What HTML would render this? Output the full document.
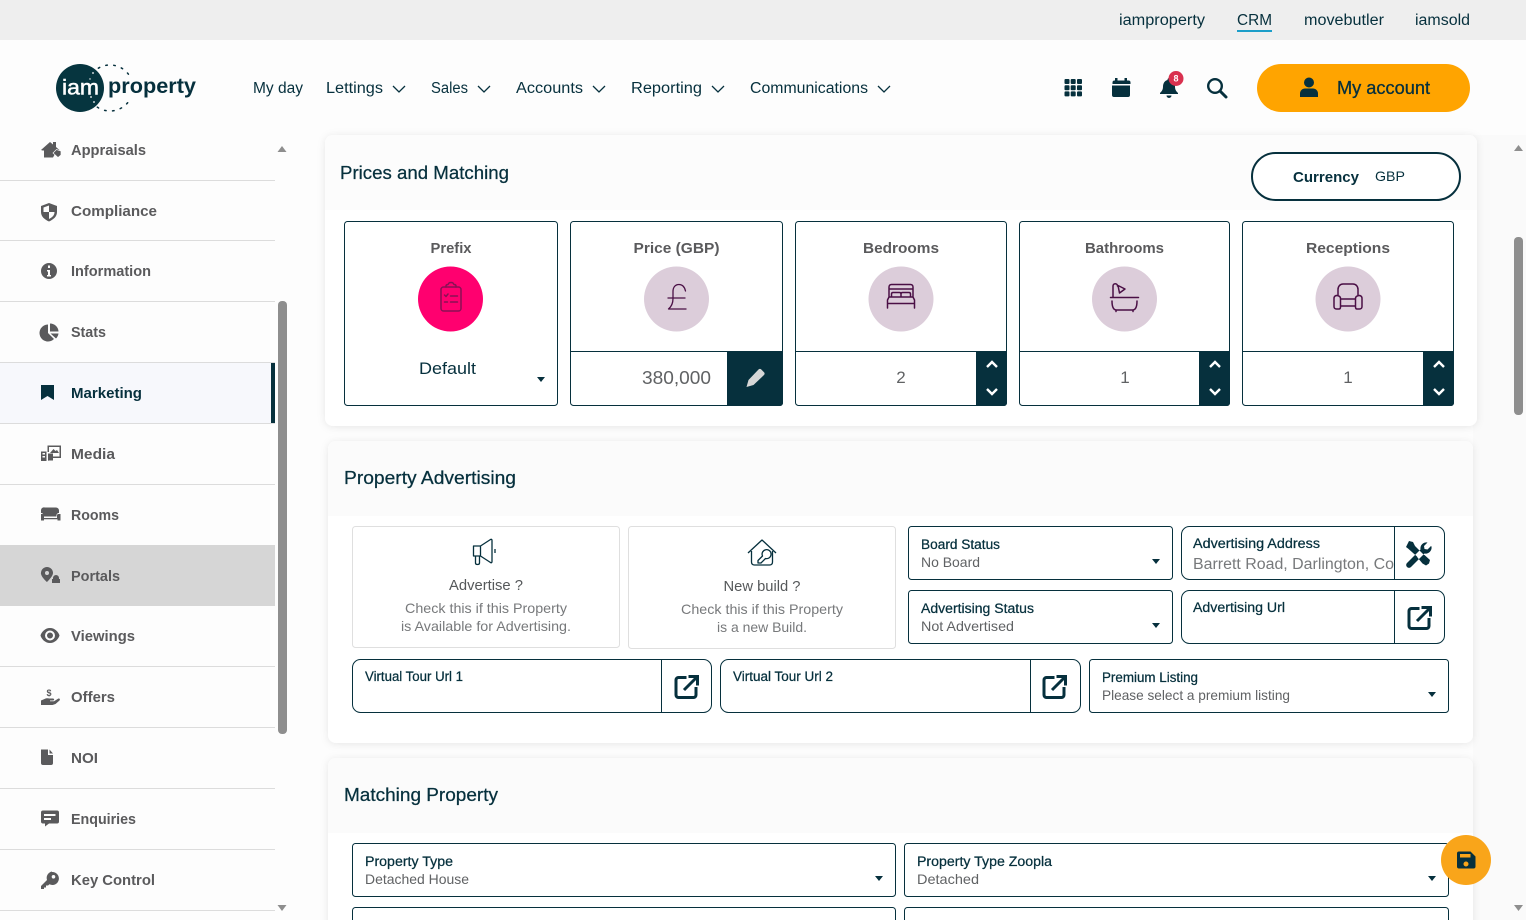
<!DOCTYPE html>
<html lang="en"><head><meta charset="utf-8"><title>iamproperty CRM</title>
<style>
html,body{margin:0;padding:0;width:1526px;height:920px;overflow:hidden;background:#fdfdfd}
svg{display:block;position:absolute;left:0;top:0}
text{font-family:"Liberation Sans",sans-serif;fill:#06303d}
.nav{font-size:15.5px}
.side{font-size:15px;font-weight:700;fill:#5a5a5c}
.title{font-size:18px;stroke:#06303d;stroke-width:.25}
.tile{font-size:15px;font-weight:700;fill:#5a5a5c;text-anchor:middle}
.lab{font-size:13.5px;stroke:#06303d;stroke-width:.25}
.val{font-size:14px;fill:#606264}
.big{font-size:15px;fill:#55585a;text-anchor:middle}
.sm{font-size:14px;fill:#77797b;text-anchor:middle}
.num{font-size:17px;fill:#606264;text-anchor:middle}
.box{fill:#fff;stroke:#06303d;stroke-width:1}
.ln{stroke:#06303d;stroke-width:1}
.sep{stroke:#dcdcdc;stroke-width:1}
.chev{fill:none;stroke:#06303d;stroke-width:1.3}
.wchev{fill:none;stroke:#fff;stroke-width:2.4}
.plum{fill:none;stroke:#4a0f45;stroke-width:1.5;stroke-linecap:round;stroke-linejoin:round}
.ico{fill:#5a5a5c}
</style></head><body>
<svg width="1526" height="920" viewBox="0 0 1526 920" xmlns="http://www.w3.org/2000/svg">
<defs>
<filter id="sh" x="-3%" y="-8%" width="106%" height="116%"><feDropShadow dx="0" dy="1" stdDeviation="4" flood-color="#000" flood-opacity=".09"/></filter>
<symbol id="ext" viewBox="0 0 26 26" width="26" height="26" overflow="visible"><path d="M12.500 3.500H4.500a2.500 2.500 0 0 0-2.500 2.500v15a2.500 2.500 0 0 0 2.500 2.500h15a2.500 2.500 0 0 0 2.500-2.500v-8" fill="none" stroke="#06303d" stroke-width="3"/><path d="M10 16L23 3M14.500 2.500h9v9" fill="none" stroke="#06303d" stroke-width="3"/></symbol>
<symbol id="caret" viewBox="0 0 8 5" width="8" height="5"><path d="M0 0h8L4 5z" fill="#06303d"/></symbol>
<symbol id="dn" viewBox="0 0 14 8" width="14" height="8" overflow="visible"><path d="M1 1l6 6 6-6" class="chev"/></symbol>
<symbol id="st" viewBox="0 0 14 9" width="14" height="9" overflow="visible"><path d="M2 7l5-5 5 5" class="wchev"/></symbol>
<symbol id="sd" viewBox="0 0 14 9" width="14" height="9" overflow="visible"><path d="M2 2l5 5 5-5" class="wchev"/></symbol>
</defs>

<!-- top bar -->
<rect width="1526" height="40" fill="#eeeeee"/>
<text x="1119" y="25" class="nav" textLength="86" lengthAdjust="spacingAndGlyphs">iamproperty</text>
<text x="1237" y="25" class="nav" textLength="35" lengthAdjust="spacingAndGlyphs">CRM</text>
<rect x="1237" y="30" width="35" height="2" fill="#1c9ec9"/>
<text x="1304" y="25" class="nav" textLength="80" lengthAdjust="spacingAndGlyphs">movebutler</text>
<text x="1415" y="25" class="nav" textLength="55" lengthAdjust="spacingAndGlyphs">iamsold</text>

<!-- logo -->
<circle cx="110" cy="88" r="23" fill="none" stroke="#06303d" stroke-width="1.500" stroke-dasharray="1.500 6.500" stroke-linecap="round"/>
<rect x="104" y="79" width="36" height="20" fill="#fdfdfd"/>
<circle cx="80" cy="88" r="24" fill="#06353f"/>
<circle cx="93" cy="73" r=".9" fill="#fff"/><circle cx="91" cy="97" r=".9" fill="#fff"/><circle cx="94" cy="102" r=".9" fill="#fff"/><circle cx="90" cy="79" r=".7" fill="#fff"/>
<text x="62" y="94.500" style="font-size:21px;fill:#fff;stroke:#fff;stroke-width:.5" textLength="37" lengthAdjust="spacingAndGlyphs">iam</text>
<text x="108" y="93" style="font-size:21px;font-weight:700" textLength="88" lengthAdjust="spacingAndGlyphs">property</text>

<!-- nav -->
<text x="253" y="93" class="nav" textLength="50" lengthAdjust="spacingAndGlyphs">My day</text>
<text x="326" y="93" class="nav" textLength="57" lengthAdjust="spacingAndGlyphs">Lettings</text><use href="#dn" x="392" y="85"/>
<text x="431" y="93" class="nav" textLength="37" lengthAdjust="spacingAndGlyphs">Sales</text><use href="#dn" x="477" y="85"/>
<text x="516" y="93" class="nav" textLength="67" lengthAdjust="spacingAndGlyphs">Accounts</text><use href="#dn" x="592" y="85"/>
<text x="631" y="93" class="nav" textLength="71" lengthAdjust="spacingAndGlyphs">Reporting</text><use href="#dn" x="711" y="85"/>
<text x="750" y="93" class="nav" textLength="118" lengthAdjust="spacingAndGlyphs">Communications</text><use href="#dn" x="877" y="85"/>

<!-- header icons -->
<g fill="#06303d">
<rect x="1064.500" y="79" width="5" height="5" rx="1"/><rect x="1070.700" y="79" width="5" height="5" rx="1"/><rect x="1077" y="79" width="5" height="5" rx="1"/><rect x="1064.500" y="85.200" width="5" height="5" rx="1"/><rect x="1070.700" y="85.200" width="5" height="5" rx="1"/><rect x="1077" y="85.200" width="5" height="5" rx="1"/><rect x="1064.500" y="91.400" width="5" height="5" rx="1"/><rect x="1070.700" y="91.400" width="5" height="5" rx="1"/><rect x="1077" y="91.400" width="5" height="5" rx="1"/>
<path d="M1115 78h2.500v2.500h7V78h2.500v2.500h1.500a2 2 0 0 1 2 2V84h-18v-1.500a2 2 0 0 1 2-2h.500zM1112 85.500h18V95a2 2 0 0 1-2 2h-14a2 2 0 0 1-2-2z"/>
<path d="M1169 78a2 2 0 0 1 1.500 2c3 .8 4.500 3.500 4.500 6.500 0 3.500 1.300 4.800 3 6.500v1h-18v-1c1.700-1.700 3-3 3-6.500 0-3 1.500-5.700 4.500-6.500a2 2 0 0 1 1.500-2zM1166.500 95.500h5a2.500 2.500 0 0 1-5 0z"/>
</g>
<circle cx="1176" cy="78.500" r="7.500" fill="#d9314f"/>
<text x="1176" y="81.500" text-anchor="middle" style="font-size:9px;font-weight:700;fill:#fff">8</text>
<circle cx="1215" cy="86" r="6.800" fill="none" stroke="#06303d" stroke-width="2.400"/><path d="M1220 91l6 6" stroke="#06303d" stroke-width="3" stroke-linecap="round"/>
<rect x="1257" y="64" width="213" height="48" rx="24" fill="#ffa400"/>
<path d="M1300 97v-3.500c0-3 2.500-5 5-5h8c2.500 0 5 2 5 5V97z" fill="#06303d"/><circle cx="1309" cy="82.500" r="5" fill="#06303d"/>
<text x="1337" y="94" style="font-size:18px;stroke:#06303d;stroke-width:.3" textLength="93" lengthAdjust="spacingAndGlyphs">My account</text>

<!-- sidebar -->
<g>
<rect x="0" y="363" width="275" height="60" fill="#f7f8fc"/>
<rect x="271" y="363" width="4" height="61" fill="#06303d"/>
<rect x="0" y="545" width="275" height="61" fill="#d6d6d6"/>
<path class="sep" d="M0 180.500h275M0 240.500h275M0 301.500h275M0 362.500h275M0 423.500h275M0 484.500h275M0 666.500h275M0 727.500h275M0 788.500h275M0 849.500h275M0 910.500h275"/>
<text x="71" y="155" class="side" textLength="75" lengthAdjust="spacingAndGlyphs">Appraisals</text>
<text x="71" y="216" class="side" textLength="86" lengthAdjust="spacingAndGlyphs">Compliance</text>
<text x="71" y="276" class="side" textLength="80" lengthAdjust="spacingAndGlyphs">Information</text>
<text x="71" y="337" class="side" textLength="35" lengthAdjust="spacingAndGlyphs">Stats</text>
<text x="71" y="398" class="side" style="fill:#06303d" textLength="71" lengthAdjust="spacingAndGlyphs">Marketing</text>
<text x="71" y="459" class="side" textLength="44" lengthAdjust="spacingAndGlyphs">Media</text>
<text x="71" y="520" class="side" textLength="48" lengthAdjust="spacingAndGlyphs">Rooms</text>
<text x="71" y="581" class="side" textLength="49" lengthAdjust="spacingAndGlyphs">Portals</text>
<text x="71" y="641" class="side" textLength="64" lengthAdjust="spacingAndGlyphs">Viewings</text>
<text x="71" y="702" class="side" textLength="44" lengthAdjust="spacingAndGlyphs">Offers</text>
<text x="71" y="763" class="side" textLength="27" lengthAdjust="spacingAndGlyphs">NOI</text>
<text x="71" y="824" class="side" textLength="65" lengthAdjust="spacingAndGlyphs">Enquiries</text>
<text x="71" y="885" class="side" textLength="84" lengthAdjust="spacingAndGlyphs">Key Control</text>

<!-- sidebar icons -->
<g class="ico">
<path d="M41 150l9-8 3 2.500V142h3v5l4 3.500-2 .5-2.500 2-2.500 4.500H44v-7h-1.500z"/><path d="M53 153l3.500-3.500 4.500 1.500v4l-3 2.500z" stroke="#fdfdfd" stroke-width=".7"/>
<path fill-rule="evenodd" d="M49 203l8 3v6c0 4.500-3.500 7.500-8 9.500-4.500-2-8-5-8-9.500v-6zM49 205.500l-5.500 2v4.500H49zM49 212v7c3-1.500 5.500-3.500 5.500-7z"/>
<path fill-rule="evenodd" d="M49 263a8 8 0 1 1 0 16 8 8 0 0 1 0-16zM48 265.500v2.500h2v-2.500zM47 270v1.500h1V275h-1v1.500h4V275h-1v-5z"/>
<path d="M48 324.500v8.500l6 6a8.500 8.500 0 1 1-6-14.500zM50 323.500a8.500 8.500 0 0 1 8.500 8H50zM50.500 333.500h8a8.500 8.500 0 0 1-2.500 5z"/>
<path d="M41 385h13v15l-6.500-4-6.500 4z" fill="#06303d"/>
<path fill-rule="evenodd" d="M47.500 445.500h13.500v12.500h-8v-1.500h6.500V447h-10.500v5h-1.500zM50 453l3.500-4 2 2 1.500-1 2 3zM41 451.500h5.500V461H41zM42.500 453v1.500h2.500V453zM42.500 456v1.500h2.500V456zM48 453.500h5v7h-4v.1h-1z"/>
<path d="M45 507.500h11a3 3 0 0 1 3 3v2.500c-1.500 0-2.500 1-2.500 2.500v1h-13v-1c0-1.500-1-2.500-2.500-2.500v-2.500a3 3 0 0 1 4-3zM41 514h1.500c1 0 1.500.5 1.500 1.500v2.500h13v-2.500c0-1 .5-1.500 1.500-1.500h2v6.500h-3v-1.300H44v1.300h-3z"/>
<path fill-rule="evenodd" d="M47 567a6 6 0 0 1 6 6c0 1-.5 2-1 3-1.500 2.500-5 6-5 6s-5-4-6-8c-.2-.500 0-1 0-1a6 6 0 0 1 6-6zM47 571a2 2 0 1 0 0 4 2 2 0 0 0 0-4z"/><path d="M53 578a3 3 0 0 1 6 0v1h1v4h-8v-4h1z"/>
<path fill-rule="evenodd" d="M50 628c5 0 8.500 4 9.500 7.500-1 3.500-4.500 7.500-9.500 7.500s-8.500-4-9.500-7.500c1-3.500 4.500-7.500 9.500-7.500zM50 630.500a5 5 0 1 0 0 10 5 5 0 0 0 0-10zM50 632.500a3 3 0 0 1 3 3 3 3 0 0 1-6 0 3 3 0 0 1 3-3z"/>
<path d="M41 700.500l3.500-1.500c2-1 3.500-.8 5-.5h3.500c1.500 0 1.500 2 0 2h-3v.7h4l4-2.500c1.500-.6 2.500.7 1.500 1.800l-4 3.500-3 1H41z"/><text x="49" y="696" style="font-size:9px;font-weight:700;fill:#5a5a5c" text-anchor="middle">$</text>
<path d="M41 749.500h7v5.500h5V763a2 2 0 0 1-2 2H43a2 2 0 0 1-2-2zM49.500 749.500l3.500 4h-3.500z"/>
<path fill-rule="evenodd" d="M43 810.500h14a2 2 0 0 1 2 2v9a2 2 0 0 1-2 2h-8l-4 3v-3h-2a2 2 0 0 1-2-2v-9a2 2 0 0 1 2-2zM44 814v2h11.500v-2zM44 818v2h7v-2z"/>
<path fill-rule="evenodd" d="M52 872a6.500 6.500 0 1 1-2.500 12.300L48 885.500h-2v2h-2v1.500h-3v-3l6-6a6.500 6.500 0 0 1 5-8.500zM53.500 875a1.800 1.800 0 1 0 0 3.600 1.800 1.800 0 0 0 0-3.600z"/>
</g>
<!-- sidebar scrollbar -->
<rect x="278" y="301" width="9" height="433" rx="4" fill="#8e8e8e"/>
<path d="M277.500 152l4.500-6 4.500 6z" fill="#8e8e8e"/>
<path d="M277.500 905l4.500 6 4.500-6z" fill="#8e8e8e"/>
</g>

<!-- main scrollbar area -->
<rect x="1473" y="135" width="53" height="785" fill="#fafafa"/>
<rect x="1514" y="237" width="9" height="178" rx="4" fill="#8e8e8e"/>
<path d="M1514 151l4.500-6 4.500 6z" fill="#8e8e8e"/>
<path d="M1514 905l4.500 6 4.500-6z" fill="#8e8e8e"/>

<!-- card 1 -->
<g>
<rect x="325" y="135" width="1152" height="291" rx="8" fill="#fff" filter="url(#sh)"/>
<path d="M325 210v-67a8 8 0 0 1 8-8h1136a8 8 0 0 1 8 8v67z" fill="#fcfcfc"/>
<text x="340" y="179" class="title" textLength="169" lengthAdjust="spacingAndGlyphs">Prices and Matching</text>
<rect x="1252" y="153" width="208" height="47" rx="23.500" fill="#fff" stroke="#06303d" stroke-width="2"/>
<text x="1293" y="182" style="font-size:15px;font-weight:700" textLength="66" lengthAdjust="spacingAndGlyphs">Currency</text>
<text x="1375" y="181" style="font-size:14px" textLength="30" lengthAdjust="spacingAndGlyphs">GBP</text>

<rect x="344.500" y="221.500" width="213" height="184" rx="3" class="box"/>
<text x="451" y="253" class="tile" textLength="41" lengthAdjust="spacingAndGlyphs">Prefix</text>
<circle cx="450.500" cy="299" r="32.500" fill="#ff006f"/>
<g class="plum" style="stroke:#8a1055"><rect x="441" y="287" width="20" height="24" rx="2.500"/><path d="M446 287v-1c0-1 1-1.500 2-1.500l1-1.500c.6-.6 3.400-.6 4 0l1 1.500c1 0 2 .5 2 1.500v1M444.500 295l1.500 1.500 2-2.500M450.500 296h7M444.500 302h3M450.500 302h7"/></g>
<text x="419" y="374" style="font-size:17px" textLength="57" lengthAdjust="spacingAndGlyphs">Default</text>
<use href="#caret" x="537" y="377"/>

<rect x="570.500" y="221.500" width="212" height="184" rx="3" class="box"/>
<text x="676.500" y="253" class="tile" textLength="86" lengthAdjust="spacingAndGlyphs">Price (GBP)</text>
<circle cx="676.500" cy="299" r="32.500" fill="#dccdda"/>
<path class="plum" d="M685.500 291c-1-4.500-3.500-6.500-6.500-6.500-4 0-6 3-6 7v7c0 4-1.500 8-4.500 10.500h17.500M668 298h17" style="stroke-width:1.300"/>
<path class="ln" d="M571 351.500h212"/>
<path d="M727 352h56v51a3 3 0 0 1-3 3h-53z" fill="#06303d"/>
<path d="M746.500 387l2-7 10-10.500c.8-.8 2-.8 2.800 0l2.700 2.700c.8.800.8 2 0 2.800l-10.500 10z" fill="#d6d6d6"/>
<text x="642" y="384" style="font-size:18.500px;fill:#606264" textLength="69" lengthAdjust="spacingAndGlyphs">380,000</text>

<rect x="795.500" y="221.500" width="211" height="184" rx="3" class="box"/>
<text x="901" y="253" class="tile" textLength="76" lengthAdjust="spacingAndGlyphs">Bedrooms</text>
<circle cx="901" cy="299" r="32.500" fill="#dccdda"/>
<path class="plum" d="M889 297v-10c0-1.500 1-2.500 2.500-2.500h19c1.500 0 2.500 1 2.500 2.500v10M889 289h24M891.500 297v-3c0-1 .5-1.500 1.500-1.500h6.500c1 0 1.500.5 1.500 1.500v3M901 297v-3c0-1 .5-1.500 1.500-1.500h6.500c1 0 1.500.5 1.500 1.500v3M887.500 308v-8l1.500-3h24l1.500 3v8M887.500 303.500h27"/>
<path class="ln" d="M796 351.500h211"/>
<path d="M976 352h31v51a3 3 0 0 1-3 3h-28z" fill="#06303d"/>
<use href="#st" x="985" y="360"/><use href="#sd" x="985" y="387"/>
<text x="901" y="383" class="num">2</text>

<rect x="1019.500" y="221.500" width="210" height="184" rx="3" class="box"/>
<text x="1124.500" y="253" class="tile" textLength="79" lengthAdjust="spacingAndGlyphs">Bathrooms</text>
<circle cx="1124.500" cy="299" r="32.500" fill="#dccdda"/>
<path class="plum" d="M1110.500 297.500h28M1113 297.500v-11.500c0-3 4.500-3 4.500 0M1118 285.500l7 3.500-5.500 4zM1112 301c0 5 1 9 4.500 9h16c3.500 0 4.500-4 4.500-9M1116 310v1.500M1133 310v1.500"/>
<path class="ln" d="M1020 351.500h210"/>
<path d="M1199 352h31v51a3 3 0 0 1-3 3h-28z" fill="#06303d"/>
<use href="#st" x="1208" y="360"/><use href="#sd" x="1208" y="387"/>
<text x="1125" y="383" class="num">1</text>

<rect x="1242.500" y="221.500" width="211" height="184" rx="3" class="box"/>
<text x="1348" y="253" class="tile" textLength="84" lengthAdjust="spacingAndGlyphs">Receptions</text>
<circle cx="1348" cy="299" r="32.500" fill="#dccdda"/>
<path class="plum" d="M1338 295v-5.500c0-3 2-5.500 5-5.500h10c3 0 5 2.500 5 5.500v5.500M1340.500 299h15M1340.500 306h15M1337 295.500c-2 0-3 1-3 3v8c0 1.500 1 2.500 2.500 2.500h2.500c1 0 1.500-1 1.500-2v-8.500c0-2-1.500-3-4.500-3zM1359 295.500c2 0 3 1 3 3v8c0 1.500-1 2.500-2.500 2.500h-2.500c-1 0-1.500-1-1.500-2v-8.500c0-2 1.500-3 4.500-3z"/>
<path class="ln" d="M1243 351.500h211"/>
<path d="M1423 352h31v51a3 3 0 0 1-3 3h-28z" fill="#06303d"/>
<use href="#st" x="1432" y="360"/><use href="#sd" x="1432" y="387"/>
<text x="1348" y="383" class="num">1</text>
</g>

<!-- card 2 -->
<g>
<rect x="328" y="441" width="1145" height="302" rx="8" fill="#fff" filter="url(#sh)"/>
<path d="M328 516v-67a8 8 0 0 1 8-8h1129a8 8 0 0 1 8 8v67z" fill="#fbfbfb"/>
<text x="344" y="484" class="title" textLength="172" lengthAdjust="spacingAndGlyphs">Property Advertising</text>

<rect x="352.500" y="526.500" width="267" height="121" rx="3" fill="#fff" stroke="#dfdfdf"/>
<path d="M473.500 546h7l10-6.500c1-.5 1.500 0 1.500 1v21c0 1-.5 1.500-1.500 1l-10-6.500h-7zM480.500 546v10M475.500 556v7c0 2 4 2 4 0v-7M495 549v4" fill="none" stroke="#06303d" stroke-width="1.300" stroke-linejoin="round"/>
<text x="486" y="590" class="big" textLength="74" lengthAdjust="spacingAndGlyphs">Advertise ?</text>
<text x="486" y="613" class="sm" textLength="162" lengthAdjust="spacingAndGlyphs">Check this if this Property</text>
<text x="486" y="631" class="sm" textLength="170" lengthAdjust="spacingAndGlyphs">is Available for Advertising.</text>

<rect x="628.500" y="526.500" width="267" height="122" rx="3" fill="#fff" stroke="#dfdfdf"/>
<path d="M748 553l14-13 14 13M751.500 551v11c0 2 1 3 3 3h15c2 0 3-1 3-3v-11M758 560.500l4.500-4.500a4.500 4.500 0 1 1 3 2.500l-4.500 4.500h-3z" fill="none" stroke="#06303d" stroke-width="1.300" stroke-linejoin="round"/>
<text x="762" y="591" class="big" textLength="77" lengthAdjust="spacingAndGlyphs">New build ?</text>
<text x="762" y="614" class="sm" textLength="162" lengthAdjust="spacingAndGlyphs">Check this if this Property</text>
<text x="762" y="632" class="sm" textLength="90" lengthAdjust="spacingAndGlyphs">is a new Build.</text>

<rect x="908.500" y="526.500" width="264" height="53" rx="3" class="box"/>
<text x="921" y="549" class="lab" textLength="79" lengthAdjust="spacingAndGlyphs">Board Status</text>
<text x="921" y="567" class="val" textLength="59" lengthAdjust="spacingAndGlyphs">No Board</text>
<use href="#caret" x="1152" y="559"/>

<rect x="908.500" y="590.500" width="264" height="53" rx="3" class="box"/>
<text x="921" y="613" class="lab" textLength="113" lengthAdjust="spacingAndGlyphs">Advertising Status</text>
<text x="921" y="631" class="val" textLength="93" lengthAdjust="spacingAndGlyphs">Not Advertised</text>
<use href="#caret" x="1152" y="623"/>

<rect x="1181.500" y="526.500" width="263" height="53" rx="8" class="box"/>
<path class="ln" d="M1394.500 527v53"/>
<text x="1193" y="548" class="lab" textLength="127" lengthAdjust="spacingAndGlyphs">Advertising Address</text>
<text x="1193" y="569" style="font-size:15.500px;fill:#77797b" textLength="201" lengthAdjust="spacingAndGlyphs">Barrett Road, Darlington, Co</text>
<path d="M1409 541l4 1 2 4 9 9 .5 0 5.500 5-1 3.500-3 2-3.500-2-5-6-.5-1-9-8-2-1.500zM1431 546l-3.500 3.500-3-.5-.5-3 3.500-3.500a6 6 0 0 0-7 7l-13.500 13.500a2.500 2.500 0 0 0 4 4l13.500-13.500a6 6 0 0 0 7-7z" fill="#06303d"/>

<rect x="1181.500" y="590.500" width="263" height="53" rx="8" class="box"/>
<path class="ln" d="M1394.500 591v53"/>
<text x="1193" y="612" class="lab" textLength="92" lengthAdjust="spacingAndGlyphs">Advertising Url</text>
<use href="#ext" x="1407" y="605"/>

<rect x="352.500" y="659.500" width="359" height="53" rx="8" class="box"/>
<path class="ln" d="M661.500 660v53"/>
<text x="365" y="681" class="lab" textLength="98" lengthAdjust="spacingAndGlyphs">Virtual Tour Url 1</text>
<use href="#ext" x="674" y="674"/>

<rect x="720.500" y="659.500" width="360" height="53" rx="8" class="box"/>
<path class="ln" d="M1030.500 660v53"/>
<text x="733" y="681" class="lab" textLength="100" lengthAdjust="spacingAndGlyphs">Virtual Tour Url 2</text>
<use href="#ext" x="1042" y="674"/>

<rect x="1089.500" y="659.500" width="359" height="53" rx="3" class="box"/>
<text x="1102" y="682" class="lab" textLength="96" lengthAdjust="spacingAndGlyphs">Premium Listing</text>
<text x="1102" y="700" class="val" textLength="188" lengthAdjust="spacingAndGlyphs">Please select a premium listing</text>
<use href="#caret" x="1428" y="692"/>
</g>

<!-- card 3 -->
<g>
<rect x="328" y="758" width="1145" height="180" rx="8" fill="#fff" filter="url(#sh)"/>
<path d="M328 833v-67a8 8 0 0 1 8-8h1129a8 8 0 0 1 8 8v67z" fill="#fbfbfb"/>
<text x="344" y="801" class="title" textLength="154" lengthAdjust="spacingAndGlyphs">Matching Property</text>
<rect x="352.500" y="843.500" width="543" height="53" rx="3" class="box"/>
<text x="365" y="866" class="lab" textLength="88" lengthAdjust="spacingAndGlyphs">Property Type</text>
<text x="365" y="884" class="val" textLength="104" lengthAdjust="spacingAndGlyphs">Detached House</text>
<use href="#caret" x="875" y="876"/>
<rect x="904.500" y="843.500" width="544" height="53" rx="3" class="box"/>
<text x="917" y="866" class="lab" textLength="135" lengthAdjust="spacingAndGlyphs">Property Type Zoopla</text>
<text x="917" y="884" class="val" textLength="62" lengthAdjust="spacingAndGlyphs">Detached</text>
<use href="#caret" x="1428" y="876"/>
<rect x="352.500" y="907.500" width="543" height="53" rx="3" class="box"/>
<rect x="904.500" y="907.500" width="544" height="53" rx="3" class="box"/>
</g>

<!-- fab -->
<circle cx="1466" cy="860" r="25" fill="#f9a51a"/>
<path fill-rule="evenodd" d="M1459 851.500h11.500l5 5v10a2 2 0 0 1-2 2h-14.500a2 2 0 0 1-2-2v-13a2 2 0 0 1 2-2zM1460 854v3.500h10.500V854zM1466 861.500a2.500 2.500 0 1 0 0 5 2.500 2.500 0 0 0 0-5z" fill="#06303d"/>
</svg>
</body></html>
